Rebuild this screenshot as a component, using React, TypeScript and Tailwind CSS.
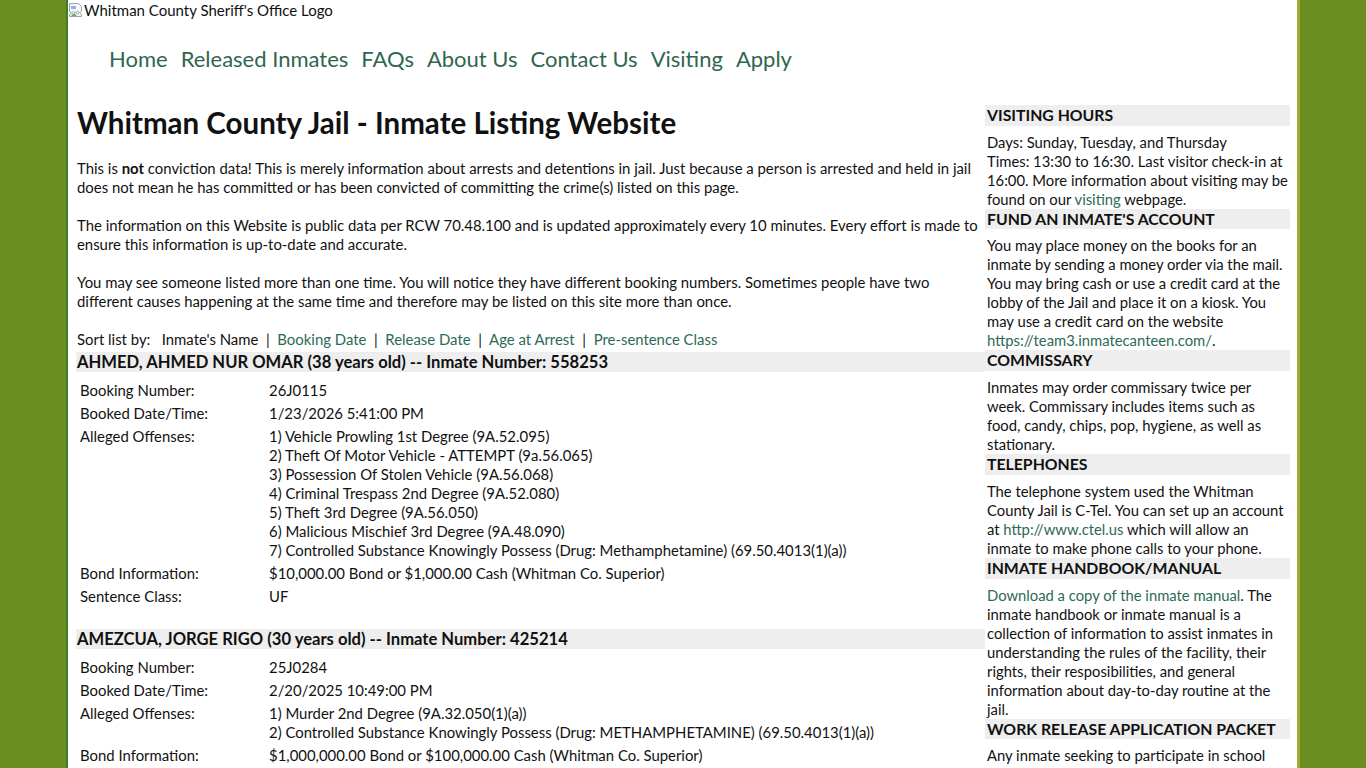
import React from 'react';

const link = 'text-[#2c6a55] hover:underline';

function BrokenImage() {
    return (
        <svg width="16" height="16" viewBox="0 0 16 16" className="inline-block align-[-2px]">
            <path d="M1.5 1.5h9l3 3v4.5l-2 1.5-2-1.5-2 2-2-1.5-2 1.5-2-1.5z" fill="#f4f6fa" stroke="#9aa3b1" />
            <path d="M3 4h5v3H3z" fill="#8fb5e8" />
            <path d="M1.5 12.5l2-1.5 2 1.5 2-2 2 1.5 2-1.5 2 1.5v2.5h-12z" fill="#eef1f5" stroke="#9aa3b1" />
            <path d="M3 14l3-2.5 3 2.5z" fill="#6aa84f" />
        </svg>
    );
}

function SideHeading({ children }: { children: React.ReactNode }) {
    return <h3 className="bg-[#eeeeee] font-bold text-[15.8px] leading-[20.7px] pl-[2px] mb-[7px]">{children}</h3>;
}

function Lines({ lines }: { lines: React.ReactNode[] }) {
    return (
        <div className="pl-[2px] text-[14.8px]">
            {lines.map((l, i) => (
                <div key={i} className="whitespace-nowrap leading-[19px]">{l}</div>
            ))}
        </div>
    );
}

type Inmate = {
    name: string;
    age: number;
    number: string;
    booking: string;
    booked: string;
    offenses: string[];
    bond: string;
    sentence?: string;
};

const inmates: Inmate[] = [
    {
        name: 'AHMED, AHMED NUR OMAR',
        age: 38,
        number: '558253',
        booking: '26J0115',
        booked: '1/23/2026 5:41:00 PM',
        offenses: [
            '1) Vehicle Prowling 1st Degree (9A.52.095)',
            '2) Theft Of Motor Vehicle - ATTEMPT (9a.56.065)',
            '3) Possession Of Stolen Vehicle (9A.56.068)',
            '4) Criminal Trespass 2nd Degree (9A.52.080)',
            '5) Theft 3rd Degree (9A.56.050)',
            '6) Malicious Mischief 3rd Degree (9A.48.090)',
            '7) Controlled Substance Knowingly Possess (Drug: Methamphetamine) (69.50.4013(1)(a))',
        ],
        bond: '$10,000.00 Bond or $1,000.00 Cash (Whitman Co. Superior)',
        sentence: 'UF',
    },
    {
        name: 'AMEZCUA, JORGE RIGO',
        age: 30,
        number: '425214',
        booking: '25J0284',
        booked: '2/20/2025 10:49:00 PM',
        offenses: [
            '1) Murder 2nd Degree (9A.32.050(1)(a))',
            '2) Controlled Substance Knowingly Possess (Drug: METHAMPHETAMINE) (69.50.4013(1)(a))',
        ],
        bond: '$1,000,000.00 Bond or $100,000.00 Cash (Whitman Co. Superior)',
        sentence: 'UF',
    },
];

function Row({ label, children }: { label: string; children: React.ReactNode }) {
    return (
        <tr>
            <td className="w-[189px] px-[3px] py-[2px] align-top leading-[19px]">{label}</td>
            <td className="px-[3px] py-[2px] align-top leading-[19px]">{children}</td>
        </tr>
    );
}

function InmateBlock({ m }: { m: Inmate }) {
    return (
        <div className="mb-[21px]">
            <h2 className="bg-[#eeeeee] font-bold text-[16.6px] leading-[20px] pl-[1px] mb-[7px]">
                {m.name} ({m.age} years old) -- Inmate Number: {m.number}
            </h2>
            <table className="border-separate border-spacing-0 ml-[1px]">
                <tbody>
                    <Row label="Booking Number:">{m.booking}</Row>
                    <Row label="Booked Date/Time:">{m.booked}</Row>
                    <Row label="Alleged Offenses:">
                        {m.offenses.map((o, i) => (
                            <div key={i}>{o}</div>
                        ))}
                    </Row>
                    <Row label="Bond Information:">{m.bond}</Row>
                    {m.sentence && <Row label="Sentence Class:">{m.sentence}</Row>}
                </tbody>
            </table>
        </div>
    );
}

export default function App() {
    const nav = ['Home', 'Released Inmates', 'FAQs', 'About Us', 'Contact Us', 'Visiting', 'Apply'];
    return (
        <div className="min-h-screen bg-[#6b8e23] font-[Lato,'Open_Sans',sans-serif] text-[14.9px] text-[#111]">
            <div className="mx-auto w-[1234px] min-h-screen bg-white border-l-2 border-l-[#3f7d2b] border-r-[3px] border-r-[#a3a83a]">
                <div className="h-[20px] flex items-center text-[15px] leading-[20px] whitespace-nowrap">
                    <BrokenImage />
                    <span>Whitman County Sheriff's Office Logo</span>
                </div>

                <nav className="flex gap-[13px] pl-[41px] pt-[24px] text-[22px] leading-[30px]">
                    {nav.map((n) => (
                        <a key={n} href="#" className="text-[#2f6650]">{n}</a>
                    ))}
                </nav>

                <div className="flex mt-[16px] pl-[8px]">
                    <main className="w-[909px] shrink-0 pt-[15px]">
                        <h1 className="font-bold text-[29.5px] leading-[36px] pl-[1px] mb-[18px]">
                            Whitman County Jail - Inmate Listing Website
                        </h1>
                        <div className="pl-[1px]">
                            <p className="mb-[19px] leading-[19px]">
                                This is <b>not</b> conviction data! This is merely information about arrests and detentions in jail. Just because a person is arrested and held in jail
                                <br />
                                does not mean he has committed or has been convicted of committing the crime(s) listed on this page.
                            </p>
                            <p className="mb-[19px] leading-[19px]">
                                The information on this Website is public data per RCW 70.48.100 and is updated approximately every 10 minutes. Every effort is made to
                                <br />
                                ensure this information is up-to-date and accurate.
                            </p>
                            <p className="mb-[19px] leading-[19px]">
                                You may see someone listed more than one time. You will notice they have different booking numbers. Sometimes people have two
                                <br />
                                different causes happening at the same time and therefore may be listed on this site more than once.
                            </p>
                            <div className="leading-[19px] mb-[3px] whitespace-pre">
                                Sort list by:{'   '}Inmate's Name{'  |  '}
                                <a href="#" className={link}>Booking Date</a>{'  |  '}
                                <a href="#" className={link}>Release Date</a>{'  |  '}
                                <a href="#" className={link}>Age at Arrest</a>{'  |  '}
                                <a href="#" className={link}>Pre-sentence Class</a>
                            </div>
                        </div>
                        {inmates.map((m) => (
                            <InmateBlock key={m.number} m={m} />
                        ))}
                    </main>

                    <aside className="w-[305px] shrink-0 pt-[15px]">
                        <SideHeading>VISITING HOURS</SideHeading>
                        <Lines
                            lines={[
                                'Days: Sunday, Tuesday, and Thursday',
                                'Times: 13:30 to 16:30. Last visitor check-in at',
                                '16:00. More information about visiting may be',
                                <>found on our <a href="#" className={link}>visiting</a> webpage.</>,
                            ]}
                        />
                        <SideHeading>FUND AN INMATE'S ACCOUNT</SideHeading>
                        <Lines
                            lines={[
                                'You may place money on the books for an',
                                'inmate by sending a money order via the mail.',
                                'You may bring cash or use a credit card at the',
                                'lobby of the Jail and place it on a kiosk. You',
                                'may use a credit card on the website',
                                <><a href="#" className={link}>https://team3.inmatecanteen.com/</a>.</>,
                            ]}
                        />
                        <SideHeading>COMMISSARY</SideHeading>
                        <Lines
                            lines={[
                                'Inmates may order commissary twice per',
                                'week. Commissary includes items such as',
                                'food, candy, chips, pop, hygiene, as well as',
                                'stationary.',
                            ]}
                        />
                        <SideHeading>TELEPHONES</SideHeading>
                        <Lines
                            lines={[
                                'The telephone system used the Whitman',
                                'County Jail is C-Tel. You can set up an account',
                                <>at <a href="#" className={link}>http://www.ctel.us</a> which will allow an</>,
                                'inmate to make phone calls to your phone.',
                            ]}
                        />
                        <SideHeading>INMATE HANDBOOK/MANUAL</SideHeading>
                        <Lines
                            lines={[
                                <><a href="#" className={link}>Download a copy of the inmate manual</a>. The</>,
                                'inmate handbook or inmate manual is a',
                                'collection of information to assist inmates in',
                                'understanding the rules of the facility, their',
                                'rights, their resposibilities, and general',
                                'information about day-to-day routine at the',
                                'jail.',
                            ]}
                        />
                        <SideHeading>WORK RELEASE APPLICATION PACKET</SideHeading>
                        <Lines lines={['Any inmate seeking to participate in school']} />
                    </aside>
                </div>
            </div>
        </div>
    );
}
